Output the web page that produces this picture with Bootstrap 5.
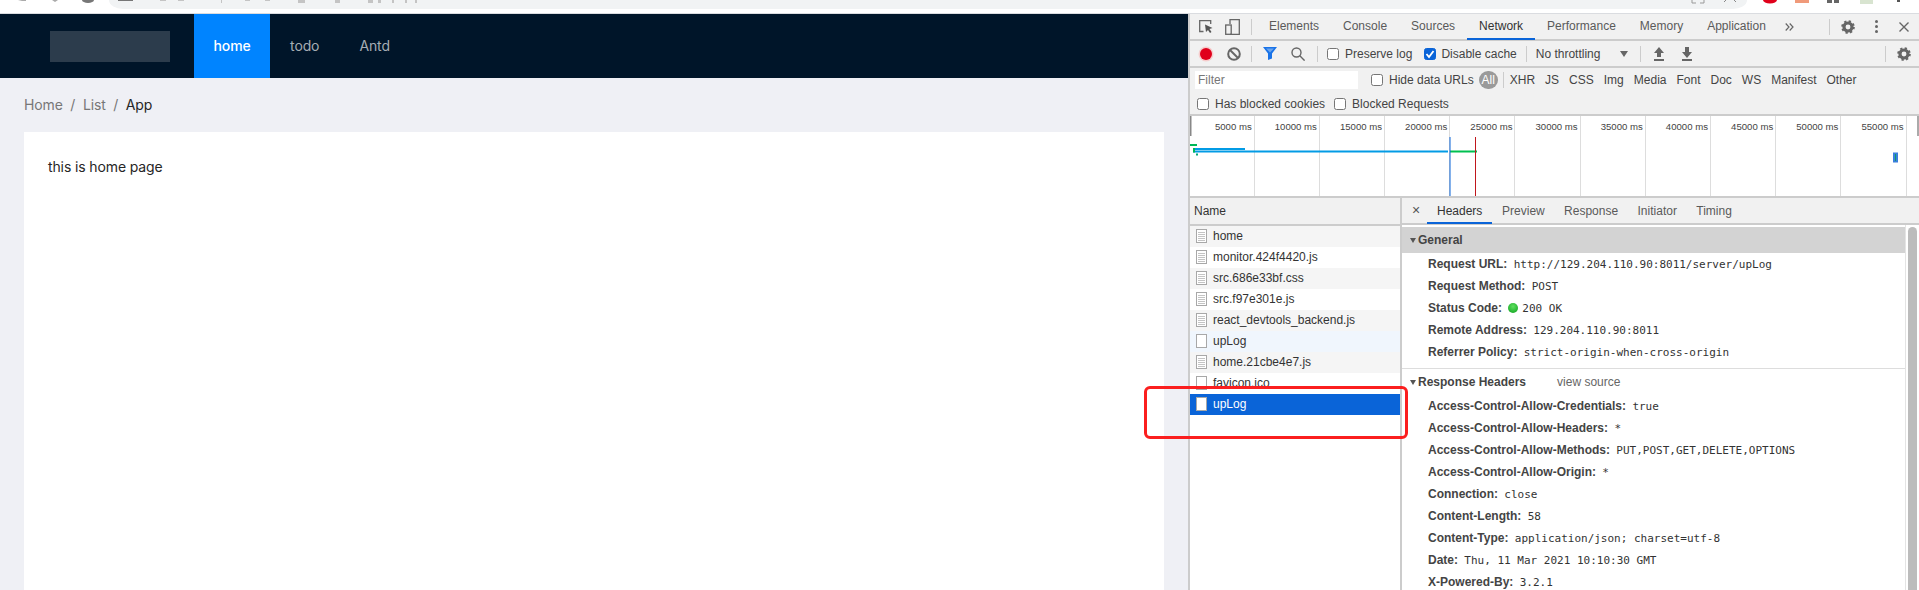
<!DOCTYPE html>
<html lang="en"><head><meta charset="utf-8"><title>App</title>
<link href="https://cdn.jsdelivr.net/npm/bootstrap@5.3.0/dist/css/bootstrap.min.css" rel="stylesheet">
<style>
html,body{margin:0;height:590px;overflow:hidden;background:#fff}
body{position:relative;font-family:Inter,"Liberation Sans",sans-serif;font-size:14px;color:#262626}
.chrome-top{height:14px;background:#fff;border-bottom:1px solid #dadce0;overflow:hidden}
.chrome-svg{display:block}
.main-split{height:576px}
.app-pane{width:1188px;background:#eff0f5;flex:none;letter-spacing:-.12px}
.app-nav{height:64px;background:#001529;padding-left:50px}
.app-logo{width:120px;height:31px;background:#2c3c4c;margin-right:24px}
.app-link{height:64px;line-height:64px;padding:0 20px;color:#a6adb4;text-decoration:none;font-size:14px}
.app-link.on{background:#0084ff;color:#fff;font-weight:500;padding:0 19.500px}
.app-crumbs{padding:0 24px;height:54px;line-height:54px;color:#777}
.app-crumbs i{font-style:normal;margin:0 7.600px}
.app-crumbs b{font-weight:400;color:#262626}
.app-sheet{margin:0 24px;background:#fff;height:458px;padding:24px;width:1140px;line-height:22px}
.dev{flex:1;min-width:0;background:#fff;border-left:2px solid #ccc;font:12px "Liberation Sans",Arial,sans-serif;color:#333;position:relative}
.dev-bar{background:#f1f1f1;border-bottom:2px solid #ccc;display:flex;align-items:center;height:27px;padding-left:5px}
.dv-icon{flex:none;display:block}
.dv-sep{width:1px;height:16px;background:#ccc;flex:none}
.dv-tab{padding:0 12px;height:27px;line-height:26px;color:#5a5a5a;flex:none;border-bottom:2px solid transparent}
.dv-tab.on{color:#333;border-bottom-color:#0a64d8}
.dv-check{width:12px;height:12px;border:1px solid #767676;border-radius:2.5px;background:#fff;flex:none;display:inline-flex;align-items:center;justify-content:center}
.dv-check.on{background:#0a64d8;border-color:#0a64d8}
.dv-lab{color:#444;flex:none;white-space:nowrap}
.throttle-lab{width:84.5px}
.filter-box{background:#f1f1f1;height:48px;border-bottom:2px solid #ccc;padding:3px 0 0 5px}
.filter-line{height:18px}
.filter-line.second{margin-top:6px;padding-left:2px}
.filter-input{width:163px;height:18px;background:#fff;padding-left:3px;line-height:18px;color:#777;flex:none}
.all-pill{width:19px;height:18px;line-height:18px;background:#9a9a9a;color:#fff;border-radius:9px;text-align:center;flex:none}
.sp-3{margin-left:3px}.sp-4{margin-left:4px}.sp-5{margin-left:5px}.sp-6{margin-left:6px}.sp-7{margin-left:7px}.sp-9{margin-left:9px}.sp-10{margin-left:10px}.sp-11{margin-left:11px}.sp-12{margin-left:12px}.sp-13{margin-left:13px}.sp-14{margin-left:14px}.sp-16{margin-left:16px}.sp-20{margin-left:20px}.sp-21{margin-left:21px}
.end-8{margin-right:8px}.end-10{margin-right:10px}
.over-view{height:82px;position:relative;border-bottom:2px solid #ccc;overflow:hidden}
.over-ticks{display:grid;grid-template-columns:repeat(11,65.2px);height:80px;margin-left:-.5px}
.over-ticks span{border-right:1px solid #ddd;text-align:right;padding:4px 2px 0 0;color:#444;font-size:9.6px;white-space:nowrap;line-height:14px}
.over-svg{position:absolute;left:0;top:0}
.net-split{height:392px}
.net-names{width:212px;border-right:2px solid #ccc;flex:none}
.names-head{height:28px;line-height:27px;background:#f1f1f1;border-bottom:2px solid #ccc;padding-left:4px;color:#333;overflow:hidden}
.name-row{height:21px;display:flex;align-items:center;gap:6px;padding:0 0 1px 6px;color:#333;white-space:nowrap;overflow:hidden}
.name-row:nth-child(odd){background:#f5f5f5}
.name-row.hover{background:#f0f6fd}
.name-row.white{background:#fff}
.name-row.sel{background:#0a64d8;color:#fff}
.detail{flex:1;min-width:0;position:relative;overflow:hidden}
.detail-tabs{height:27px;background:#f1f1f1;border-bottom:2px solid #ccc;display:flex;padding-left:6px;align-items:flex-start}
.detail-tab{padding:0 9.700px;height:26px;line-height:26px;color:#5a5a5a}
.detail-tab.on{color:#333;border-bottom:2px solid #0a64d8;padding:0 10px}
.detail-x{width:16px;line-height:25px;color:#555;font-size:14px;text-align:center;margin-right:3px}
.sec-head{font-weight:700;color:#444;height:26px;line-height:26px;padding-left:8px;display:flex;align-items:center;gap:2px}
.sec-head.gray{background:#d3d3d3;margin-top:2px;margin-right:14px}
.sec-tri{width:0;height:0;border-left:3.5px solid transparent;border-right:3.5px solid transparent;border-top:5px solid #555;flex:none}
.src-link{font-weight:400;color:#666;margin-left:29px}
.hdr-list{padding:0;margin:0;list-style:none;width:100%}
.hdr-list li{height:22px;line-height:22px;padding-left:26px;white-space:nowrap}
.hdr-list b{color:#444;font-weight:700;margin-right:3px}
.hdr-list code{font:11px "DejaVu Sans Mono",monospace;color:#333}
.stat-dot{display:inline-block;width:10px;height:10px;border-radius:50%;background:radial-gradient(circle at 50% 35%,#5fe05f,#0a9e1c);vertical-align:-1px;margin-right:4px}
.sec-rule{border-top:1px solid #ddd;margin-top:5px;margin-right:14px}
.scroll-track{position:absolute;right:0;top:27px;bottom:0;width:14px;background:#fff;border-left:1px solid #e4e4e4}
.scroll-thumb{position:absolute;left:2px;right:2px;top:2px;bottom:-20px;background:#bcbcbc;border-radius:5px}
.note-box{position:absolute;left:1144px;top:386px;width:264px;height:53px;border:3px solid #fb1f1f;border-radius:6px;pointer-events:none}
.doc-ic{width:11px;height:14px;border:1px solid #a8a8a8;background:#fff;flex:none;background-image:repeating-linear-gradient(#fff 0 1px,#c4c4c4 1px 2px);background-size:7px 10px;background-position:1px 1px;background-repeat:no-repeat}
.doc-ic.blank{background-image:none}
</style></head>
<body>
<div class="chrome-top">
  <svg class="chrome-svg" width="1919" height="13" viewBox="0 0 1919 13">
    <path d="M109 0h1638a14 9 0 0 1-14 9H123a14 9 0 0 1-14-9z" fill="#f1f3f4"/>
    <path d="M18 0h8v1h-4z M52 0h6l-3 2z" fill="#aaa"/>
    <path d="M82 0h12a6 3 0 0 1-12 0z" fill="#777"/>
    <rect x="118" y="0" width="15" height="1" fill="#777"/>
    <g fill="#c4c4c4"><rect x="160" y="0" width="6" height="1"/><rect x="178" y="0" width="6" height="1"/><rect x="221" y="0" width="1" height="3"/><rect x="245" y="0" width="5" height="1"/><rect x="265" y="0" width="5" height="1"/><rect x="298" y="0" width="7" height="3"/><rect x="335" y="0" width="5" height="3"/><rect x="368" y="0" width="5" height="3"/><rect x="378" y="0" width="3" height="3"/><rect x="392" y="0" width="2" height="3"/><rect x="405" y="0" width="2" height="3"/><rect x="415" y="0" width="2" height="3"/></g>
    <path d="M1692 0v3h4M1700 3h4V0" fill="none" stroke="#999"/>
    <path d="M1726 0l-2 2M1734 0l2 2" stroke="#888" fill="none"/>
    <path d="M1763 0h14a7 3.500 0 0 1-14 0z" fill="#e0001b"/>
    <rect x="1795" y="0" width="14" height="3" fill="#f09a7a"/>
    <rect x="1827" y="0" width="5" height="3" fill="#666"/><rect x="1834" y="0" width="5" height="3" fill="#666"/>
    <rect x="1860" y="0" width="13" height="4" fill="#d8e4d0"/>
    <rect x="1897" y="0" width="3" height="2" fill="#555"/>
  </svg>
</div>
<div class="main-split d-flex">
  <div class="app-pane">
    <nav class="app-nav d-flex align-items-center">
      <div class="app-logo"></div>
      <a class="app-link on" href="#">home</a><a class="app-link" href="#">todo</a><a class="app-link" href="#">Antd</a>
    </nav>
    <div class="app-crumbs">Home<i>/</i>List<i>/</i><b>App</b></div>
    <div class="app-sheet">this is home page</div>
  </div>
  <div class="dev">
    <svg width="0" height="0" class="position-absolute"><defs>
      <symbol id="gear-ic" viewBox="0 0 16 16"><circle cx="8" cy="8" r="4.600" fill="none" stroke="#666" stroke-width="3.600"/><circle cx="8" cy="8" r="6.600" fill="none" stroke="#666" stroke-width="2.400" stroke-dasharray="2.590 2.590"/></symbol>
    </defs></svg>
    <div class="dev-bar">
      <svg class="dv-icon sp-4" width="14" height="13" viewBox="0 0 14 13" fill="none"><path d="M4.500 11.500H.7V.7h11v3.300" stroke="#666" stroke-width="1.300"/><path d="M6 4.500l7.500 3.500-3 1 2 3-1.500.9-2-3-2 2z" fill="#555"/></svg>
      <svg class="dv-icon sp-12" width="15" height="16" viewBox="0 0 15 16" fill="none" stroke="#666" stroke-width="1.300"><path d="M5 5V.7h9.300v14.600H5"/><rect x=".7" y="6" width="5.500" height="9.300"/></svg>
      <div class="dv-sep sp-11"></div>
      <div class="dv-tab sp-5">Elements</div><div class="dv-tab">Console</div><div class="dv-tab">Sources</div><div class="dv-tab on">Network</div><div class="dv-tab">Performance</div><div class="dv-tab">Memory</div><div class="dv-tab">Application</div>
      <svg class="dv-icon sp-7" width="9" height="8" viewBox="0 0 9 8" fill="none" stroke="#666" stroke-width="1.200"><path d="M.7.5L4 4 .7 7.500M4.700.5L8 4 4.700 7.500"/></svg>
      <div class="flex-grow-1"></div>
      <div class="dv-sep"></div>
      <svg class="dv-icon sp-11" width="14" height="14"><use href="#gear-ic"/></svg>
      <svg class="dv-icon sp-20" width="3" height="13" viewBox="0 0 3 13" fill="#666"><circle cx="1.500" cy="1.500" r="1.500"/><circle cx="1.500" cy="6.500" r="1.500"/><circle cx="1.500" cy="11.500" r="1.500"/></svg>
      <svg class="dv-icon sp-21 end-10" width="10" height="10" viewBox="0 0 10 10" stroke="#666" stroke-width="1.400"><path d="M.5.500l9 9M9.500.500l-9 9"/></svg>
    </div>
    <div class="dev-bar">
      <svg class="dv-icon sp-3" width="16" height="16" viewBox="0 0 16 16"><circle cx="8" cy="8" r="7.500" fill="#f6cccc"/><circle cx="8" cy="8" r="6" fill="#e0001b"/></svg>
      <svg class="dv-icon sp-13" width="14" height="14" viewBox="0 0 14 14" fill="none" stroke="#666" stroke-width="2"><circle cx="7" cy="7" r="5.800"/><path d="M3 3l8 8"/></svg>
      <div class="dv-sep sp-10"></div>
      <svg class="dv-icon sp-11" width="14" height="13" viewBox="0 0 14 13"><path d="M0 0h14L9 6.500V11.500L5 13V6.500z" fill="#1a73e8"/><path d="M3 1.500h8L7 5.500z" fill="#6aa5ee"/></svg>
      <svg class="dv-icon sp-14" width="14" height="14" viewBox="0 0 14 14" fill="none" stroke="#666" stroke-width="1.400"><circle cx="5.500" cy="5.500" r="4.500"/><path d="M8.800 8.800l4.800 4.800"/></svg>
      <div class="dv-sep sp-12"></div>
      <span class="dv-check sp-9"></span><span class="dv-lab sp-6">Preserve log</span>
      <span class="dv-check on sp-12"><svg width="10" height="10" viewBox="0 0 10 10" fill="none" stroke="#fff" stroke-width="1.800"><path d="M1.500 5l2.500 3 4.500-6"/></svg></span><span class="dv-lab sp-5">Disable cache</span>
      <div class="dv-sep sp-9"></div>
      <span class="dv-lab throttle-lab sp-9">No throttling</span>
      <svg class="dv-icon" width="8" height="6" viewBox="0 0 8 6"><path d="M0 0h8L4 6z" fill="#666"/></svg>
      <div class="dv-sep sp-12"></div>
      <svg class="dv-icon sp-12" width="12" height="14" viewBox="0 0 12 14" fill="#666"><path d="M6 0l5 6H8v4H4V6H1zM1 12h10v2H1z"/></svg>
      <svg class="dv-icon sp-16" width="12" height="14" viewBox="0 0 12 14" fill="#666"><path d="M4 0h4v5h3l-5 6-5-6h3zM1 12h10v2H1z"/></svg>
      <div class="flex-grow-1"></div>
      <div class="dv-sep"></div>
      <svg class="dv-icon sp-11 end-8" width="14" height="14"><use href="#gear-ic"/></svg>
    </div>
    <div class="filter-box">
      <div class="filter-line d-flex align-items-center">
        <div class="filter-input">Filter</div>
        <span class="dv-check sp-13"></span><span class="dv-lab sp-6">Hide data URLs</span>
        <div class="all-pill sp-5">All</div>
        <div class="dv-sep sp-5"></div>
        <span class="dv-lab sp-6">XHR</span><span class="dv-lab sp-10">JS</span><span class="dv-lab sp-10">CSS</span><span class="dv-lab sp-10">Img</span><span class="dv-lab sp-10">Media</span><span class="dv-lab sp-10">Font</span><span class="dv-lab sp-10">Doc</span><span class="dv-lab sp-10">WS</span><span class="dv-lab sp-10">Manifest</span><span class="dv-lab sp-10">Other</span>
      </div>
      <div class="filter-line second d-flex align-items-center">
        <span class="dv-check"></span><span class="dv-lab sp-6">Has blocked cookies</span>
        <span class="dv-check sp-9"></span><span class="dv-lab sp-6">Blocked Requests</span>
      </div>
    </div>
    <div class="over-view">
      <div class="over-ticks"><span>5000 ms</span><span>10000 ms</span><span>15000 ms</span><span>20000 ms</span><span>25000 ms</span><span>30000 ms</span><span>35000 ms</span><span>40000 ms</span><span>45000 ms</span><span>50000 ms</span><span>55000 ms</span></div>
      <svg class="over-svg" width="729" height="80">
        <path d="M0 0h1.500v20H0z" fill="#888"/><path d="M727 0h2v20h-2z" fill="#aaa"/>
        <rect x="0" y="28" width="7" height="2" fill="#00b858"/>
        <rect x="3" y="32" width="52" height="2" fill="#039be5"/>
        <rect x="3" y="34.500" width="255" height="2" fill="#039be5"/>
        <rect x="260" y="34.500" width="27" height="2" fill="#00c050"/>
        <rect x="3" y="32" width="2" height="4.500" fill="#00b858"/>
        <rect x="6" y="37.500" width="2" height="2" fill="#00a878"/>
        <rect x="259.500" y="21" width="1" height="59" fill="#0a64d8"/>
        <rect x="285" y="21" width="1" height="59" fill="#c0161c"/>
        <rect x="703" y="36.500" width="5" height="10" fill="#3a7fdc"/>
        <rect x="705" y="38" width="1" height="7" fill="#0a9e6c"/>
      </svg>
    </div>
    <div class="net-split d-flex">
      <div class="net-names">
        <div class="names-head">Name</div>
        <div>
          <div class="name-row"><span class="doc-ic"></span>home</div>
          <div class="name-row white"><span class="doc-ic"></span>monitor.424f4420.js</div>
          <div class="name-row"><span class="doc-ic"></span>src.686e33bf.css</div>
          <div class="name-row white"><span class="doc-ic"></span>src.f97e301e.js</div>
          <div class="name-row"><span class="doc-ic"></span>react_devtools_backend.js</div>
          <div class="name-row hover"><span class="doc-ic blank"></span>upLog</div>
          <div class="name-row"><span class="doc-ic"></span>home.21cbe4e7.js</div>
          <div class="name-row white"><span class="doc-ic blank"></span>favicon.ico</div>
          <div class="name-row sel"><span class="doc-ic blank"></span>upLog</div>
        </div>
      </div>
      <div class="detail">
        <div class="detail-tabs">
          <div class="detail-x">×</div>
          <div class="detail-tab on">Headers</div><div class="detail-tab">Preview</div><div class="detail-tab">Response</div><div class="detail-tab">Initiator</div><div class="detail-tab">Timing</div>
        </div>
        <div class="sec-head gray"><span class="sec-tri"></span>General</div>
        <ul class="hdr-list">
          <li><b>Request URL:</b> <code>http://129.204.110.90:8011/server/upLog</code></li>
          <li><b>Request Method:</b> <code>POST</code></li>
          <li><b>Status Code:</b> <span class="stat-dot"></span><code>200 OK</code></li>
          <li><b>Remote Address:</b> <code>129.204.110.90:8011</code></li>
          <li><b>Referrer Policy:</b> <code>strict-origin-when-cross-origin</code></li>
        </ul>
        <div class="sec-rule"></div>
        <div class="sec-head"><span class="sec-tri"></span>Response Headers<span class="src-link">view source</span></div>
        <ul class="hdr-list">
          <li><b>Access-Control-Allow-Credentials:</b> <code>true</code></li>
          <li><b>Access-Control-Allow-Headers:</b> <code>*</code></li>
          <li><b>Access-Control-Allow-Methods:</b> <code>PUT,POST,GET,DELETE,OPTIONS</code></li>
          <li><b>Access-Control-Allow-Origin:</b> <code>*</code></li>
          <li><b>Connection:</b> <code>close</code></li>
          <li><b>Content-Length:</b> <code>58</code></li>
          <li><b>Content-Type:</b> <code>application/json; charset=utf-8</code></li>
          <li><b>Date:</b> <code>Thu, 11 Mar 2021 10:10:30 GMT</code></li>
          <li><b>X-Powered-By:</b> <code>3.2.1</code></li>
        </ul>
        <div class="scroll-track"><div class="scroll-thumb"></div></div>
      </div>
    </div>
  </div>
</div>
<div class="note-box"></div>
<script src="https://cdn.jsdelivr.net/npm/bootstrap@5.3.0/dist/js/bootstrap.bundle.min.js"></script>
</body></html>
